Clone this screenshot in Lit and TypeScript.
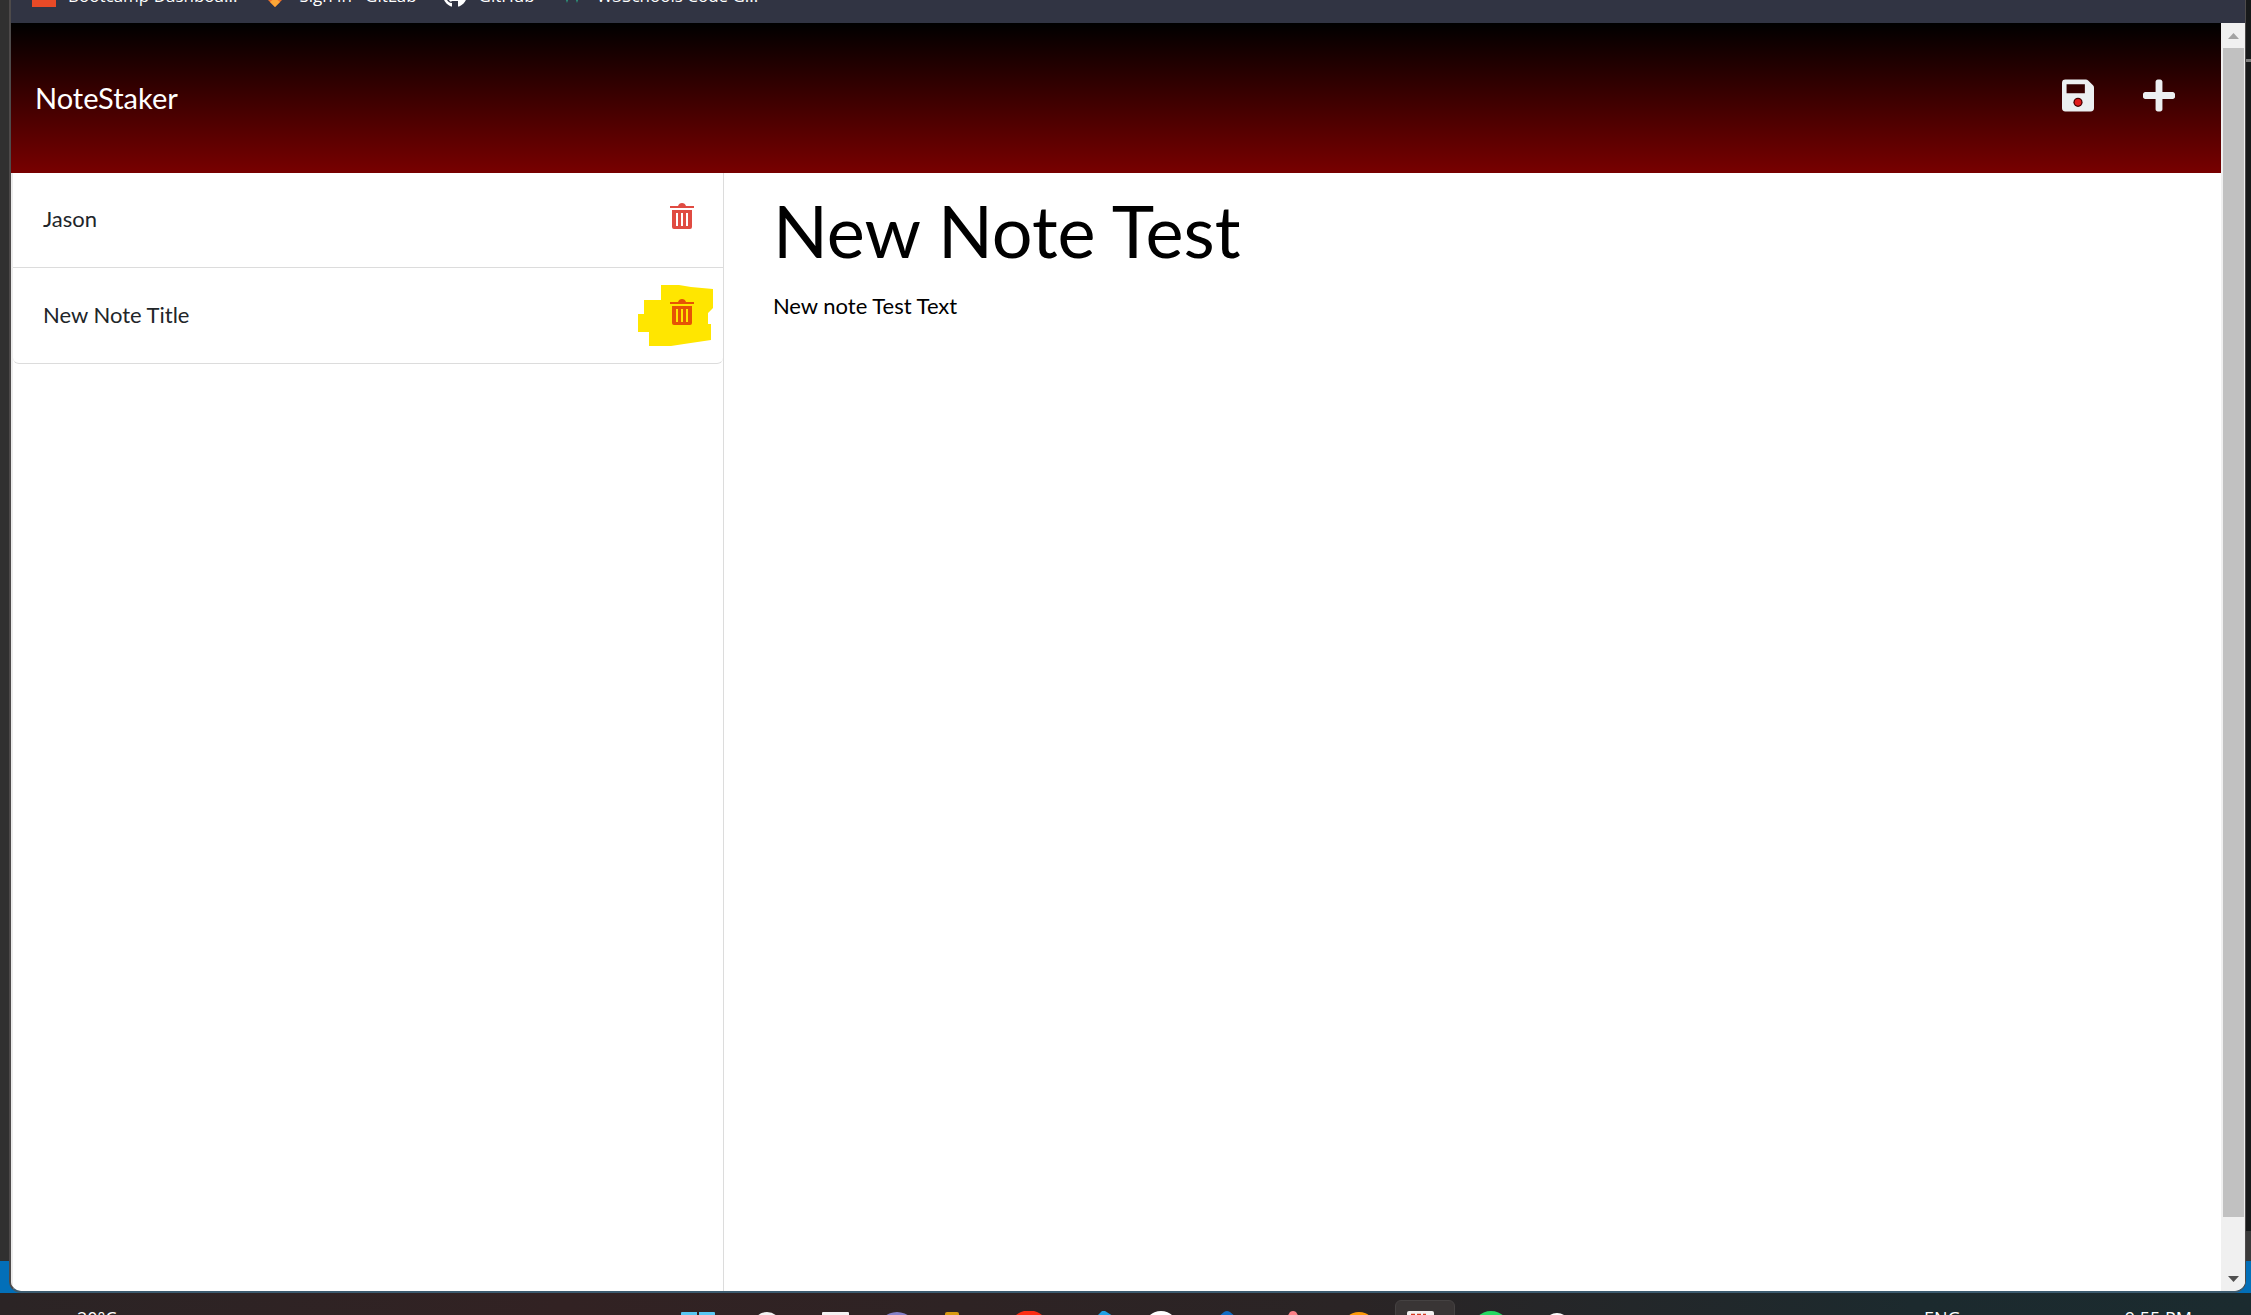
import { LitElement, html, css, svg } from "lit";
import { customElement, state } from "lit/decorators.js";

interface Note {
  title: string;
  text: string;
}

const trashIcon = svg`
  <path d="M0 3h8q1-3 4-3t4 3h8v2H0z" />
  <path fill-rule="evenodd" d="M2 7h20v17q0 2-2 2H4q-2 0-2-2zM6 10v13h2V10zM11 10v13h2V10zM16 10v13h2V10z" />
`;

/** Bookmarks sit half above the top edge of the screen; only their lowest rows show. */
const bookmarks = [
  { label: "Bootcamp Dashboa...", icon: svg`<rect width="24" height="24" fill="#e84a27" />` },
  {
    label: "Sign in · GitLab",
    icon: svg`<path d="M0 12l12 12 12-12z" fill="#f3702a" /><path d="M7 19l5-4 5 4-5 5z" fill="#fca636" />`,
  },
  {
    label: "GitHub",
    icon: svg`<circle cx="12" cy="12" r="12" fill="#fff" /><path d="M9 24v-4c-3 0-4-2-5-3l2 0c1 2 2 2 3 1h6v6z" fill="#313443" />`,
  },
  {
    label: "W3Schools Code G...",
    icon: svg`<path d="M3 10l3 10 3-10zM13 10l3 10 3-10z" fill="#2ba486" />`,
  },
];

/** Taskbar icons in order, with the tip of each visible above the screen edge. */
const taskIcons = [
  { name: "Start", art: svg`<path d="M4 3q0-1 1-1h15v15H4zM22 2h15q1 0 1 1v14H22z" fill="#58c7f3" />` },
  { name: "Search", art: svg`<circle cx="24" cy="16" r="14" fill="#f4f4f4" />` },
  { name: "Task view", art: svg`<rect x="13" y="2" width="27" height="20" rx="1" fill="#f4f2f3" />` },
  { name: "Chat", art: svg`<circle cx="22" cy="22" r="20" fill="#8480c8" />` },
  { name: "Files", art: svg`<rect x="4" y="2" width="14" height="14" rx="2" fill="#d89a10" />` },
  { name: "Browser", art: svg`<path d="M8 6q3-3 6-4l3-1h10l3 1q3 1 6 4v9H8z" fill="#fb2d12" />` },
  { name: "Editor", art: svg`<path d="M24 6l5-5h3l8 5v9H24z" fill="#21a0e4" />` },
  { name: "Repository", art: svg`<circle cx="22" cy="18" r="17" fill="#fff" />` },
  { name: "Terminal", art: svg`<path d="M13 7l6-5q3-2 6 0l6 5z" fill="#116cc4" />` },
  { name: "Design", art: svg`<path d="M16 7l3-5q3-2 6 0l3 5z" fill="#fa7f86" />` },
  { name: "Music", art: svg`<circle cx="22" cy="19" r="17" fill="#fc9a09" />` },
  {
    name: "Snipping Tool",
    active: true,
    art: svg`<rect x="4" y="1" width="27" height="20" rx="2" fill="#f3f1f0" /><path d="M8 4.500h4M14 4.500h4M20 4.500h3" stroke="#d63a20" stroke-width="1.600" />`,
  },
  { name: "Messages", art: svg`<circle cx="22" cy="20" r="19" fill="#24d862" />` },
  { name: "Updates", art: svg`<circle cx="22" cy="16" r="13" fill="#fff" />` },
];

@customElement("app-root")
export class AppRoot extends LitElement {
  static styles = css`
    :host {
      display: block;
      height: 100vh;
      overflow: hidden;
      font-family: Lato, "Open Sans", sans-serif;
      font-size: 22px;
      line-height: 36px;
      color: #212529;
    }
    *, *::before, *::after { box-sizing: border-box; }
    button {
      padding: 0;
      border: 0;
      background: none;
      font: inherit;
      color: inherit;
      cursor: pointer;
    }
    svg { display: block; }
    .desktop {
      height: 100%;
      display: flex;
      flex-direction: column;
      background: linear-gradient(90deg, #303030 50%, #17191a 50%);
    }
    .stage {
      flex: 1;
      min-height: 0;
      padding: 0 5px 0 9px;
      background:
        linear-gradient(#036fb8, #036fb8) bottom / 100% 32px no-repeat,
        linear-gradient(#0000 59px, #7c7c7c 59px 62px, #0000 62px calc(100% - 62px), #3a3a3a calc(100% - 62px)) right / 6px 100% no-repeat;
    }
    .window {
      height: 100%;
      display: flex;
      flex-direction: column;
      overflow: hidden;
      border: 2px solid #4d4a4a;
      border-width: 0 1px 2px 2px;
      border-bottom-color: #3d5c70;
      border-radius: 0 0 12px 12px;
      background: #fff;
    }
    .bookmarks {
      flex: none;
      height: 23px;
      display: flex;
      align-items: flex-end;
      gap: 26px;
      padding: 0 21px 16px;
      background: #313443;
      overflow: hidden;
    }
    .bookmark {
      display: flex;
      align-items: flex-end;
      gap: 12px;
      color: #fff;
      font: 17px/22px "Open Sans", "Noto Sans", sans-serif;
      text-decoration: none;
      white-space: nowrap;
    }
    .bookmark svg { width: 24px; height: 24px; }
    .viewport { flex: 1; min-height: 0; display: flex; }
    .page { flex: 1; min-width: 0; display: flex; flex-direction: column; }
    .navbar {
      flex: none;
      height: 150px;
      display: flex;
      align-items: center;
      justify-content: space-between;
      padding: 0 46px 0 24px;
      background: linear-gradient(#000, #780000);
    }
    .brand { color: #fff; font-size: 29px; line-height: 44px; text-decoration: none; }
    .tools { display: flex; gap: 49px; padding-bottom: 6px; color: #eceff1; }
    .tools svg { width: 32px; height: 37px; fill: currentColor; }
    .columns { flex: 1; min-height: 0; display: grid; grid-template-columns: 10fr 21fr; }
    .sidebar { border-right: 1px solid #dcdcdc; border-left: 2px solid #ececec; }
    .notes { margin: -1px 0 0; padding: 0; list-style: none; }
    .note {
      display: flex;
      align-items: center;
      justify-content: space-between;
      height: 96px;
      padding: 0 29px 0 30px;
      border-bottom: 1px solid #dcdcdc;
    }
    .note:last-child { border-radius: 0 0 6px 6px; }
    .name { padding-bottom: 2px; }
    .trash { position: relative; margin-bottom: 8px; color: #e04b42; }
    .trash .can { position: relative; width: 24px; height: 26px; fill: currentColor; }
    .marked { color: #e65305; }
    .marker { position: absolute; left: -32px; top: -14px; width: 76px; height: 62px; fill: #ffe600; }
    .detail { padding: 11px 49px; color: #000; }
    .title { margin: 0 0 12px; font-size: 72px; font-weight: 400; line-height: 92px; }
    .text { margin: 0; }
    .scrollbar {
      flex: none;
      width: 24px;
      display: flex;
      flex-direction: column;
      align-items: center;
      padding: 0 1px 0 2px;
      background: #f0f0f0;
    }
    .arrow { height: 25px; display: grid; place-items: center; }
    .arrow svg { width: 11px; height: 6px; fill: #a3a3a3; }
    .down svg { fill: #505050; }
    .track { flex: 1; width: 100%; }
    .thumb { height: 96%; background: #c1c1c1; }
    .taskbar {
      flex: none;
      height: 22px;
      display: grid;
      grid-template-columns: 28% auto 1fr;
      padding: 0 59px 0 77px;
      overflow: hidden;
      background: linear-gradient(90deg, #2b2425, #322223 25%, #2a2425 60%, #1c2a2e 85%, #1b2b2f);
      color: #fff;
      font: 18px/24px "Open Sans", "Noto Sans", sans-serif;
    }
    .weather, .tray { padding-top: 13px; }
    .tray { display: flex; justify-content: flex-end; gap: 164px; }
    .apps { display: flex; gap: 6px; padding: 7px 0 0; }
    .app { flex: none; width: 60px; height: 60px; border: 1px solid transparent; border-radius: 6px; }
    .active { background: #393535; border-color: #454242; }
    .app svg { width: 44px; height: 44px; margin: 9px 7px; }
  `;

  @state() private notes: Note[] = [
    { title: "Jason", text: "" },
    { title: "New Note Title", text: "" },
  ];

  @state() private current: Note = { title: "New Note Test", text: "New note Test Text" };

  private save() {
    this.notes = [...this.notes, this.current];
  }

  private create() {
    this.current = { title: "", text: "" };
  }

  private remove(note: Note) {
    this.notes = this.notes.filter((n) => n !== note);
  }

  private renderNote(note: Note, index: number) {
    const marked = index === 1;
    return html`
      <li class="note">
        <button class="name" @click=${() => (this.current = note)}>${note.title}</button>
        <button class="trash ${marked ? "marked" : ""}" aria-label="Delete note" @click=${() => this.remove(note)}>
          ${marked
            ? html`<svg class="marker" viewBox="0 0 76 62" aria-hidden="true">
                <path d="M23 0h18l12 2 22 2v19l-5 5v11h3v16l-27 4-13 2H11V47H0V29h6V15h17z" />
              </svg>`
            : null}
          <svg class="can" viewBox="0 0 24 26" aria-hidden="true">${trashIcon}</svg>
        </button>
      </li>
    `;
  }

  render() {
    return html`
      <div class="desktop">
        <div class="stage">
          <div class="window">
            <nav class="bookmarks">
              ${bookmarks.map(
                (b) => html`<a class="bookmark" href="#">
                  <svg viewBox="0 0 24 24" aria-hidden="true">${b.icon}</svg><span>${b.label}</span>
                </a>`
              )}
            </nav>
            <div class="viewport">
              <div class="page">
                <header class="navbar">
                  <a class="brand" href="#">NoteStaker</a>
                  <div class="tools">
                    <button aria-label="Save note" @click=${this.save}>
                      <svg viewBox="0 0 448 512" aria-hidden="true">
                        <path fill-rule="evenodd" d="M48 32h286q18 0 32 14l68 68q14 14 14 32v286q0 48-48 48H48q-48 0-48-48V80q0-48 48-48zM64 98v126h256V98z" />
                        <circle cx="224" cy="352" r="64" fill="#480000" />
                        <circle cx="224" cy="352" r="46" fill="#e01b1b" />
                      </svg>
                    </button>
                    <button aria-label="New note" @click=${this.create}>
                      <svg viewBox="0 0 448 512" aria-hidden="true">
                        <path d="M416 208H272V64c0-17.670-14.330-32-32-32h-32c-17.670 0-32 14.330-32 32v144H32c-17.670 0-32 14.330-32 32v32c0 17.670 14.330 32 32 32h144v144c0 17.670 14.330 32 32 32h32c17.670 0 32-14.330 32-32V304h144c17.670 0 32-14.330 32-32v-32c0-17.670-14.330-32-32-32z" />
                      </svg>
                    </button>
                  </div>
                </header>
                <main class="columns">
                  <aside class="sidebar">
                    <ul class="notes">${this.notes.map((n, i) => this.renderNote(n, i))}</ul>
                  </aside>
                  <section class="detail">
                    <h1 class="title">${this.current.title}</h1>
                    <p class="text">${this.current.text}</p>
                  </section>
                </main>
              </div>
              <div class="scrollbar">
                <button class="arrow" aria-label="Scroll up"><svg viewBox="0 0 11 6"><path d="M0 6L5.500 0 11 6z" /></svg></button>
                <div class="track"><div class="thumb"></div></div>
                <button class="arrow down" aria-label="Scroll down"><svg viewBox="0 0 11 6"><path d="M0 0l5.500 6L11 0z" /></svg></button>
              </div>
            </div>
          </div>
        </div>
        <footer class="taskbar">
          <span class="weather">20°C</span>
          <div class="apps">
            ${taskIcons.map(
              (t) => html`<button class="app ${t.active ? "active" : ""}" aria-label=${t.name}>
                <svg viewBox="0 0 44 44" aria-hidden="true">${t.art}</svg>
              </button>`
            )}
          </div>
          <div class="tray"><span>ENG</span><span>9:55 PM</span></div>
        </footer>
      </div>
    `;
  }
}
